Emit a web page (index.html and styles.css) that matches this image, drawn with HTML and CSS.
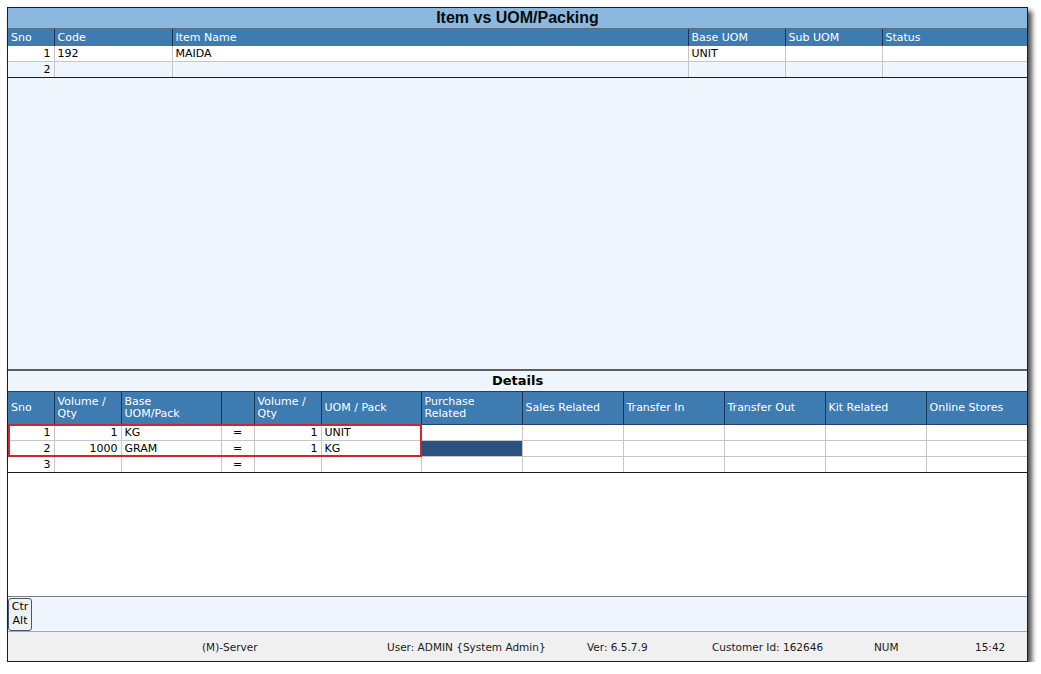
FILE: index.html
```html
<!DOCTYPE html>
<html>
<head>
<meta charset="utf-8">
<link rel="stylesheet" href="styles.css">
</head>
<body>
<div class="window">
  <div class="title">Item vs UOM/Packing</div>
  <table class="grid top">
    <colgroup><col style="width:46px"><col style="width:118px"><col style="width:516px"><col style="width:97px"><col style="width:97px"><col></colgroup>
    <thead>
      <tr><th>Sno</th><th>Code</th><th>Item Name</th><th>Base UOM</th><th>Sub UOM</th><th>Status</th></tr>
    </thead>
    <tbody>
      <tr><td class="num">1</td><td>192</td><td>MAIDA</td><td>UNIT</td><td></td><td></td></tr>
      <tr class="alt"><td class="num">2</td><td></td><td></td><td></td><td></td><td></td></tr>
    </tbody>
  </table>
  <div class="upper-fill"></div>
  <div class="subtitle">Details</div>
  <div class="details-wrap">
    <table class="grid details">
      <colgroup><col style="width:46px"><col style="width:67px"><col style="width:100px"><col style="width:33px"><col style="width:67px"><col style="width:100px"><col style="width:101px"><col style="width:101px"><col style="width:101px"><col style="width:101px"><col style="width:101px"><col></colgroup>
      <thead>
        <tr><th>Sno</th><th>Volume /<br>Qty</th><th>Base<br>UOM/Pack</th><th></th><th>Volume /<br>Qty</th><th>UOM / Pack</th><th>Purchase<br>Related</th><th>Sales Related</th><th>Transfer In</th><th>Transfer Out</th><th>Kit Related</th><th>Online Stores</th></tr>
      </thead>
      <tbody>
        <tr><td class="num">1</td><td class="num">1</td><td>KG</td><td class="eq">=</td><td class="num">1</td><td>UNIT</td><td></td><td></td><td></td><td></td><td></td><td></td></tr>
        <tr><td class="num">2</td><td class="num">1000</td><td>GRAM</td><td class="eq">=</td><td class="num">1</td><td>KG</td><td class="sel"></td><td></td><td></td><td></td><td></td><td></td></tr>
        <tr><td class="num">3</td><td class="num"></td><td></td><td class="eq">=</td><td class="num"></td><td></td><td></td><td></td><td></td><td></td><td></td><td></td></tr>
      </tbody>
    </table>
    <div class="highlight"></div>
  </div>
  <div class="lower-fill"></div>
  <div class="panel">
    <div class="key">Ctr<br>Alt</div>
  </div>
  <div class="status">
    <span>(M)-Server</span>
    <span>User: ADMIN {System Admin}</span>
    <span>Ver: 6.5.7.9</span>
    <span>Customer Id: 162646</span>
    <span>NUM</span>
    <span>15:42</span>
  </div>
</div>
</body>
</html>
```
FILE: styles.css
```css
html, body {
  margin: 0;
  padding: 0;
  background: #ffffff;
}
body {
  font-family: "DejaVu Sans", Verdana, sans-serif;
  font-size: 11px;
  color: #000;
}
.window {
  margin: 7px 0 0 7px;
  width: 1019px;
  height: 653px;
  border: 1px solid #1c1c1c;
  display: flex;
  flex-direction: column;
  box-shadow: 4px 4px 5px rgba(0, 0, 0, 0.7);
  background: #eef5fd;
}
.title {
  height: 20px;
  line-height: 20px;
  background: #8ab8de;
  border-bottom: 1px solid #5b6e80;
  text-align: center;
  font-family: "Liberation Sans", Arial, sans-serif;
  font-weight: bold;
  font-size: 16px;
  color: #0a0a0a;
  flex: none;
}
.grid {
  border-collapse: collapse;
  table-layout: fixed;
  width: 1019px;
  flex: none;
}
.grid th {
  background: #3d7bb0;
  color: #ffffff;
  font-weight: normal;
  text-align: left;
  padding: 0 3px;
  border-left: 1px solid #1d3550;
  white-space: nowrap;
  overflow: hidden;
}
.grid th:first-child {
  border-left: none;
}
.grid td {
  height: 15px;
  line-height: 15px;
  padding: 0 3px;
  border-left: 1px solid #c6c6c6;
  border-bottom: 1px solid #c6c6c6;
  background: #ffffff;
  white-space: nowrap;
  overflow: hidden;
}
.grid td:first-child {
  border-left: none;
}
.grid td.num {
  text-align: right;
}
.grid td.eq {
  text-align: center;
}
.top th {
  height: 17px;
  line-height: 17px;
}
.top tr.alt td {
  background: #eef5fd;
}
.top tbody tr:last-child td {
  border-bottom: 1px solid #1c1c1c;
}
.upper-fill {
  flex: 1;
  background: #eef5fd;
  border-bottom: 2px solid #5e5e5e;
}
.subtitle {
  height: 20px;
  line-height: 20px;
  text-align: center;
  font-weight: bold;
  font-size: 13px;
  background: #eef5fd;
  flex: none;
}
.details-wrap {
  position: relative;
  flex: none;
}
.details th {
  height: 32px;
  line-height: 12px;
  vertical-align: middle;
  border-top: 1px solid #24405e;
  border-bottom: 1px solid #24405e;
}
.details tbody tr:last-child td {
  border-bottom: 1px solid #1c1c1c;
}
.details td.sel {
  background: #29527f;
}
.highlight {
  position: absolute;
  left: 0;
  top: 33px;
  width: 410px;
  height: 29px;
  border: 2px solid #d3232c;
  pointer-events: none;
}
.lower-fill {
  flex: none;
  height: 123px;
  background: #ffffff;
  border-bottom: 1px solid #7d7d7d;
}
.panel {
  flex: none;
  height: 34px;
  background: #eef5fd;
  border-bottom: 1px solid #a9a9a9;
  display: flex;
  align-items: center;
}
.key {
  width: 22px;
  height: 31px;
  border: 1px solid #3f5870;
  border-radius: 3px;
  background: #eef1f4;
  text-align: center;
  line-height: 14px;
  font-size: 11px;
  display: flex;
  flex-direction: column;
  justify-content: center;
}
.status {
  flex: none;
  height: 29px;
  background: #f0f0f0;
  display: grid;
  grid-template-columns: 185px 200px 125px 162px 101px 1fr;
  align-items: center;
  padding-left: 194px;
  font-size: 10.5px;
  color: #1a1a1a;
}
```
